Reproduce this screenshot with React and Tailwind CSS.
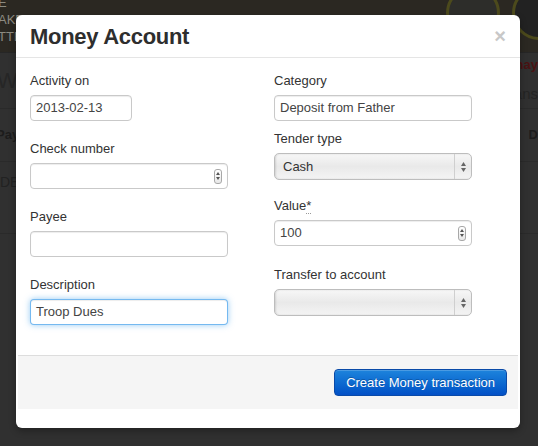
import React from 'react';

// Spinner drawn like the old Safari number-input stepper
function Stepper() {
    return (
        <div className="w-[8px] h-[15px] rounded-[3px] border border-[#a8a8a8] bg-gradient-to-b from-white to-[#e8e8e8] flex flex-col items-center justify-center gap-[2px]">
            <svg width="4" height="3" viewBox="0 0 4 3"><path d="M2 0L4 3H0z" fill="#555" /></svg>
            <svg width="4" height="3" viewBox="0 0 4 3"><path d="M0 0H4L2 3z" fill="#555" /></svg>
        </div>
    );
}

function Field({ label, star, className = '', children }) {
    return (
        <div className={className}>
            <div className="text-[13px] leading-[20px] text-[#333] mb-[4px]">
                {label}
                {star && <span className="border-b border-dotted border-[#999]">*</span>}
            </div>
            {children}
        </div>
    );
}

function TextInput({ value = '', width = 'w-[198px]', focus = false, spinner = false }) {
    const ring = focus
        ? 'border-[rgba(82,168,236,0.8)] shadow-[inset_0_1px_1px_rgba(0,0,0,0.075),0_0_6px_rgba(82,168,236,0.6)]'
        : 'border-[#c9c9c9] shadow-[inset_0_1px_1px_rgba(0,0,0,0.075)]';
    return (
        <div className={`${width} h-[26px] rounded-[4px] border bg-white flex items-center px-[5px] ${ring}`}>
            <span className="flex-1 text-[13px] text-[#444]">{value}</span>
            {spinner && <Stepper />}
        </div>
    );
}

function Select({ value = '' }) {
    return (
        <div className="w-[198px] h-[27px] rounded-[5px] border border-[#bdbdbd] bg-gradient-to-b from-[#f7f7f7] via-[#e9e9e9] to-[#f4f4f4] shadow-[inset_1px_0_2px_rgba(0,0,0,0.12),0_1px_0_rgba(255,255,255,0.6)] flex items-center">
            <span className="flex-1 pl-[8px] text-[13px] text-[#333]">{value}</span>
            <div className="w-[17px] h-full border-l border-[#cfcfcf] flex flex-col items-center justify-center gap-[2px]">
                <svg width="5" height="4" viewBox="0 0 5 4"><path d="M2.5 0L5 4H0z" fill="#666" /></svg>
                <svg width="5" height="4" viewBox="0 0 5 4"><path d="M0 0H5L2.5 4z" fill="#666" /></svg>
            </div>
        </div>
    );
}

// Blurred page behind the dialog
function BackgroundPage() {
    return (
        <div className="w-[538px] h-[446px] bg-[#303030] flex flex-col text-[#1c1c1c]">
            <div className="h-[53px] bg-[#2b2822] border-b border-[#262626] flex justify-between">
                <div className="text-[13px] leading-[17px] text-[#8c8a80] -mt-[6px] -ml-[2px]">
                    <div>E</div>
                    <div>AKE!!</div>
                    <div>TTE</div>
                </div>
                <div className="flex gap-[12px] -mt-[14px]">
                    <div className="w-[54px] h-[54px] rounded-full border-[3px] border-[#4c4a1c] bg-[#2d2d2a]" />
                    <div className="w-[54px] h-[54px] rounded-full border-[3px] border-[#4c4a1c] bg-[#222] -mr-[28px]" />
                </div>
            </div>
            <div className="h-[56px] border-b border-[#2a2a2a] flex justify-between items-center">
                <span className="text-[22px] text-[#262626] -ml-[3px]">W</span>
                <div className="flex flex-col items-end self-stretch">
                    <span className="text-[13px] font-bold text-[#4a1212] mt-[2px]">nay</span>
                    <span className="text-[15px] text-[#242424] mt-[8px]">ans</span>
                </div>
            </div>
            <div className="h-[53px] border-b border-[#2a2a2a] flex justify-between items-center">
                <span className="text-[13px] font-bold -ml-[4px]">Pay</span>
                <span className="text-[13px] font-bold">D</span>
            </div>
            <div className="h-[72px] border-b border-[#2a2a2a] flex items-start pt-[10px]">
                <span className="text-[14px] text-[#222]">DE</span>
            </div>
        </div>
    );
}

export default function App() {
    return (
        <div className="relative w-[538px] h-[446px] overflow-hidden" style={{ fontFamily: '"Liberation Sans", Arial, sans-serif' }}>
            <BackgroundPage />

            {/* MODAL */}
            <div className="absolute left-[16px] top-[15px] w-[504px] h-[413px] bg-white rounded-[6px] shadow-[0_3px_7px_rgba(0,0,0,0.3)] flex flex-col">
                <div className="h-[43px] border-b border-[#e5e5e5] flex items-start justify-between pl-[14px] pr-[14px]">
                    <h3 className="text-[22px] leading-[26px] font-bold text-[#2e2e2e] mt-[9px] tracking-[-0.3px]">Money Account</h3>
                    <span className="text-[20px] leading-[20px] font-bold text-[#c8c8c8] mt-[11px]">×</span>
                </div>

                <div className="flex-1 flex pl-[14px] pt-[13px]">
                    <div className="w-[244px] flex flex-col">
                        <Field label="Activity on">
                            <TextInput value="2013-02-13" width="w-[102px]" />
                        </Field>
                        <Field label="Check number" className="mt-[18px]">
                            <TextInput spinner />
                        </Field>
                        <Field label="Payee" className="mt-[18px]">
                            <TextInput />
                        </Field>
                        <Field label="Description" className="mt-[18px]">
                            <TextInput value="Troop Dues" focus />
                        </Field>
                    </div>
                    <div className="flex flex-col">
                        <Field label="Category">
                            <TextInput value="Deposit from Father" />
                        </Field>
                        <Field label="Tender type" className="mt-[8px]">
                            <Select value="Cash" />
                        </Field>
                        <Field label="Value" star className="mt-[16px]">
                            <TextInput value="100" spinner />
                        </Field>
                        <Field label="Transfer to account" className="mt-[19px]">
                            <Select />
                        </Field>
                    </div>
                </div>

                <div className="h-[54px] mx-[2px] bg-[#f5f5f5] border-t border-[#dddddd] flex items-center justify-end pr-[11px]">
                    <button className="h-[27px] px-[11px] rounded-[4px] bg-gradient-to-b from-[#1e84dc] to-[#0450c6] border border-[#0a4aa8] text-white text-[13px] shadow-[inset_0_1px_0_rgba(255,255,255,0.2)] [text-shadow:0_-1px_0_rgba(0,0,0,0.25)]">
                        Create Money transaction
                    </button>
                </div>
                <div className="h-[19px]" />
            </div>
        </div>
    );
}
